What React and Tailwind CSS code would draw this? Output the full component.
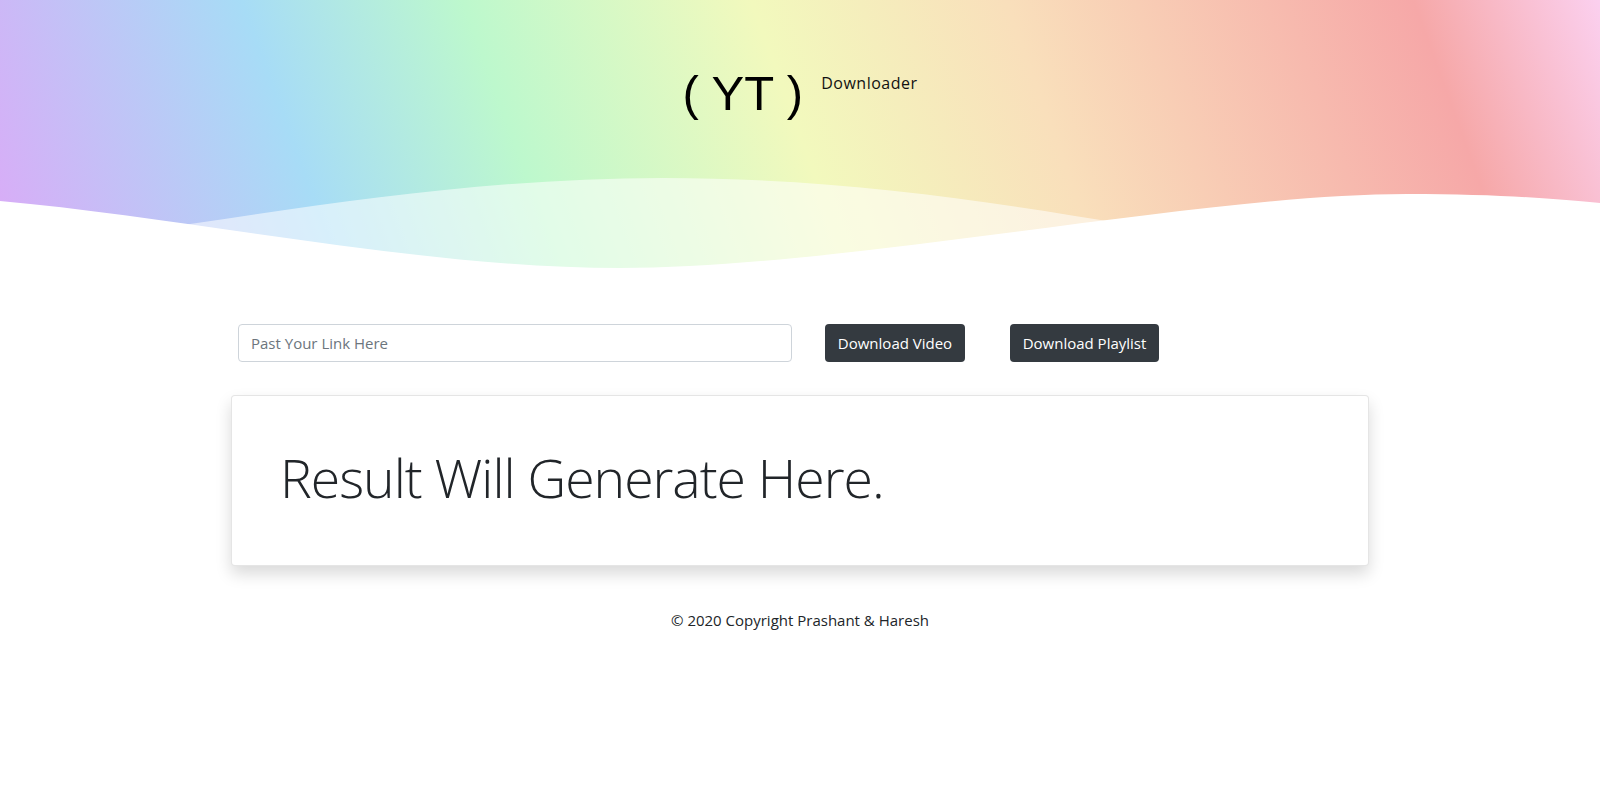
import React from 'react';

function HeaderWave() {
  return (
    <svg
      className="absolute inset-0 h-full w-full"
      viewBox="0 0 1600 270"
      preserveAspectRatio="none"
      aria-hidden="true"
    >
      <path
        d="M0,250 C200,228 420,178 663,178 C880,178 1050,212 1250,245 L1250,270 L0,270 Z"
        fill="#ffffff"
        fillOpacity="0.55"
      />
      <path
        d="M0,201 C190,218 420,268 620,268 C850,268 1200,194 1407,194 C1500,194 1560,199 1600,203 L1600,270 L0,270 Z"
        fill="#ffffff"
      />
    </svg>
  );
}

export default function App() {
  return (
    <div className="min-h-screen bg-white font-['Open_Sans','Noto_Sans',sans-serif] text-[#212529]">
      <header className="relative h-[270px] overflow-hidden bg-[linear-gradient(70deg,#dbaaf7_0%,#a7dcf6_20%,#bdf8cd_33%,#f2f9bd_50%,#f9dfbb_65%,#f6a8a8_89%,#fbd0ef_100%)]">
        <HeaderWave />
        <div className="relative flex justify-center items-start gap-[18px] pt-[69px]">
          <h1 className="text-[49px] leading-none text-black font-['Liberation_Sans',Arial,sans-serif] whitespace-pre">( YT )</h1>
          <span className="mt-[2px] text-[16px] leading-6 tracking-[0.5px] text-[#111]">Downloader</span>
        </div>
      </header>

      <main className="w-[1140px] mx-auto">
        <div className="flex items-center mt-[54px] h-[38px]">
          <input
            type="text"
            placeholder="Past Your Link Here"
            className="ml-[8px] w-[554px] h-[38px] px-3 rounded border border-[#ced4da] text-[15px] text-[#495057] placeholder:text-[#6c757d] outline-none"
          />
          <button className="ml-[33px] w-[140px] h-[38px] rounded bg-[#343a40] text-white text-[15px]">Download Video</button>
          <button className="ml-[45px] w-[149px] h-[38px] rounded bg-[#343a40] text-white text-[15px]">Download Playlist</button>
        </div>

        <section className="mt-[33px] h-[171px] ml-[1px] w-[1138px] flex items-center pl-[48px] rounded border border-black/10 bg-white shadow-[0_8px_16px_rgba(0,0,0,0.15)]">
          <p className="text-[53.5px] font-light leading-[1.2] tracking-[-1px] -mt-[4px]">Result Will Generate Here.</p>
        </section>

        <footer className="mt-[42px] text-center text-[15px] leading-6 text-[#212529]">
          © 2020 Copyright Prashant &amp; Haresh
        </footer>
      </main>
    </div>
  );
}
